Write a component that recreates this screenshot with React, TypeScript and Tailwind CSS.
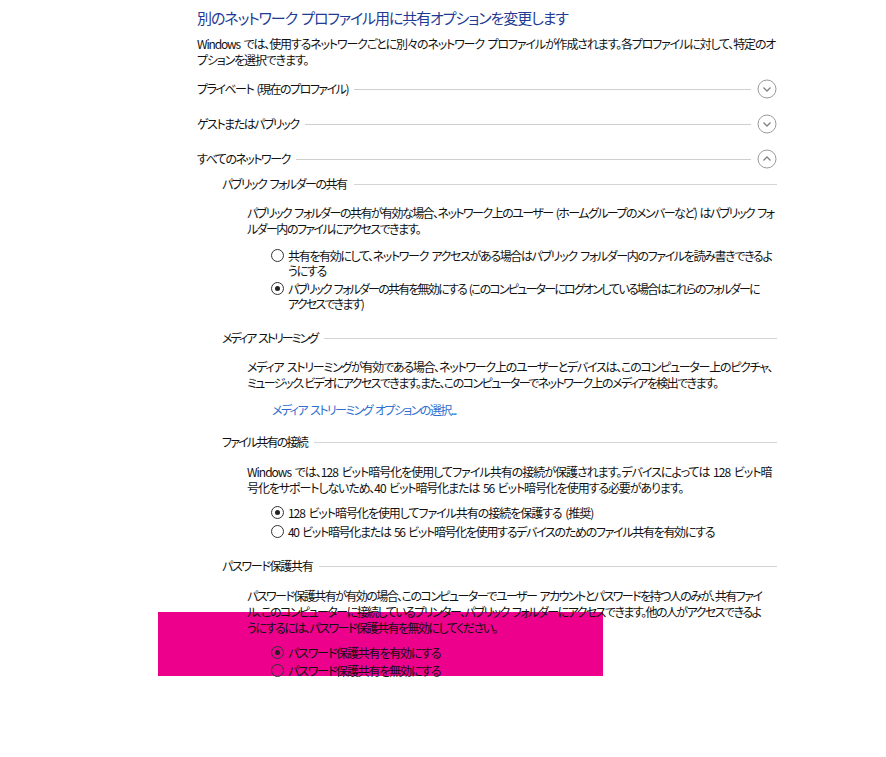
import React from "react";

type Line = { t: string; c?: string };

const Chevron = ({ up }: { up?: boolean }) => (
  <svg width="20" height="20" viewBox="0 0 20 20" className="shrink-0">
    <circle cx="10" cy="10" r="9" fill="none" stroke="#9a9a9a" strokeWidth="1" />
    {up ? (
      <path d="M6.5 11.5 L10 8 L13.5 11.5" fill="none" stroke="#808080" strokeWidth="1.3" />
    ) : (
      <path d="M6.5 8.5 L10 12 L13.5 8.5" fill="none" stroke="#808080" strokeWidth="1.3" />
    )}
  </svg>
);

const ProfileRow = ({ label, up, mt }: { label: string; up?: boolean; mt: string }) => (
  <div className={`flex items-center h-[20px] ${mt}`}>
    <span className="whitespace-nowrap tracking-[-1.5px]">{label}</span>
    <div className="flex-1 h-px bg-[#cfcfcf] ml-[6px] mr-[6px]" />
    <Chevron up={up} />
  </div>
);

const SubHeader = ({ label, mt, tr }: { label: string; mt: string; tr: string }) => (
  <div className={`flex items-center h-[16px] ${mt}`}>
    <span className={`whitespace-nowrap ${tr}`}>{label}</span>
    <div className="flex-1 h-px bg-[#d4d4d4] ml-[7px]" />
  </div>
);

const Radio = ({ checked, lines, mt }: { checked?: boolean; lines: Line[]; mt: string }) => (
  <div className={`flex items-start ${mt}`}>
    <div className="mt-[1px] w-[13px] h-[13px] rounded-full border border-[#333] flex items-center justify-center shrink-0">
      {checked && <div className="w-[5px] h-[5px] rounded-full bg-[#222]" />}
    </div>
    <div className="ml-[4px] leading-[15px] whitespace-nowrap">
      {lines.map((l, i) => (
        <div key={i} className={l.c ?? "tracking-[-1.3px]"}>
          {l.t}
        </div>
      ))}
    </div>
  </div>
);

const Para = ({ lines, mt }: { lines: Line[]; mt: string }) => (
  <div className={`leading-[16px] whitespace-nowrap ${mt}`}>
    {lines.map((l, i) => (
      <div key={i} className={l.c ?? "tracking-[-1.4px]"}>
        {l.t}
      </div>
    ))}
  </div>
);

export default function App() {
  return (
    <div className="relative w-[886px] h-[757px] bg-white overflow-hidden text-[12px] text-[#111] font-['Noto_Sans_CJK_JP','Noto_Sans',sans-serif] [font-feature-settings:'palt'] [word-spacing:2px]">
      <div className="absolute left-[158px] top-[612px] w-[445px] h-[64px] bg-[#ec008c]" />
      <div className="relative pl-[197px] pr-[109px] pt-[8px]">
        <div className="h-[20px] leading-[20px] text-[15px] tracking-[-1.1px] text-[#1e3a94] whitespace-nowrap">
          別のネットワーク プロファイル用に共有オプションを変更します
        </div>
        <Para
          mt="mt-[8px]"
          lines={[
            {
              t: "Windows では、使用するネットワークごとに別々のネットワーク プロファイルが作成されます。各プロファイルに対して、特定のオ",
              c: "tracking-[-1.15px]",
            },
            { t: "プションを選択できます。", c: "tracking-[-1.15px]" },
          ]}
        />
        <ProfileRow label="プライベート (現在のプロファイル)" mt="mt-[11px]" />
        <ProfileRow label="ゲストまたはパブリック" mt="mt-[15px]" />
        <ProfileRow label="すべてのネットワーク" up mt="mt-[15px]" />

        <div className="pl-[25px]">
          <SubHeader label="パブリック フォルダーの共有" mt="mt-[7px]" tr="tracking-[-1.5px]" />
          <div className="pl-[25px]">
            <Para
              mt="mt-[13px]"
              lines={[
                {
                  t: "パブリック フォルダーの共有が有効な場合、ネットワーク上のユーザー (ホームグループのメンバーなど) はパブリック フォ",
                  c: "tracking-[-1.55px]",
                },
                { t: "ルダー内のファイルにアクセスできます。", c: "tracking-[-1.55px]" },
              ]}
            />
            <div className="pl-[24px]">
              <Radio
                mt="mt-[11px]"
                lines={[
                  {
                    t: "共有を有効にして、ネットワーク アクセスがある場合はパブリック フォルダー内のファイルを読み書きできるよ",
                    c: "tracking-[-1.35px]",
                  },
                  { t: "うにする", c: "tracking-[-1.35px]" },
                ]}
              />
              <Radio
                checked
                mt="mt-[3px]"
                lines={[
                  {
                    t: "パブリック フォルダーの共有を無効にする (このコンピューターにログオンしている場合はこれらのフォルダーに",
                    c: "tracking-[-1.8px]",
                  },
                  { t: "アクセスできます)", c: "tracking-[-1.8px]" },
                ]}
              />
            </div>
          </div>

          <SubHeader label="メディア ストリーミング" mt="mt-[19px]" tr="tracking-[-2px]" />
          <div className="pl-[25px]">
            <Para
              mt="mt-[13px]"
              lines={[
                {
                  t: "メディア ストリーミングが有効である場合、ネットワーク上のユーザーとデバイスは、このコンピューター上のピクチャ、",
                  c: "tracking-[-1.25px]",
                },
                {
                  t: "ミュージック、ビデオにアクセスできます。また、このコンピューターでネットワーク上のメディアを検出できます。",
                  c: "tracking-[-1.6px]",
                },
              ]}
            />
            <div className="pl-[25px] mt-[11px] h-[16px] leading-[16px] tracking-[-1.6px] text-[#2f6fd0] whitespace-nowrap">
              メディア ストリーミング オプションの選択...
            </div>
          </div>

          <SubHeader label="ファイル共有の接続" mt="mt-[16px]" tr="tracking-[-1.8px]" />
          <div className="pl-[25px]">
            <Para
              mt="mt-[14px]"
              lines={[
                {
                  t: "Windows では、128 ビット暗号化を使用してファイル共有の接続が保護されます。デバイスによっては 128 ビット暗",
                  c: "tracking-[-1px]",
                },
                {
                  t: "号化をサポートしないため、40 ビット暗号化または 56 ビット暗号化を使用する必要があります。",
                  c: "tracking-[-1.1px]",
                },
              ]}
            />
            <div className="pl-[24px]">
              <Radio
                checked
                mt="mt-[9px]"
                lines={[{ t: "128 ビット暗号化を使用してファイル共有の接続を保護する (推奨)", c: "tracking-[-1.05px]" }]}
              />
              <Radio
                mt="mt-[4px]"
                lines={[
                  {
                    t: "40 ビット暗号化または 56 ビット暗号化を使用するデバイスのためのファイル共有を有効にする",
                    c: "tracking-[-1.3px]",
                  },
                ]}
              />
            </div>
          </div>

          <SubHeader label="パスワード保護共有" mt="mt-[19px]" tr="tracking-[-1.3px]" />
          <div className="pl-[25px]">
            <Para
              mt="mt-[14px]"
              lines={[
                {
                  t: "パスワード保護共有が有効の場合、このコンピューターでユーザー アカウントとパスワードを持つ人のみが、共有ファイ",
                  c: "tracking-[-1.55px]",
                },
                {
                  t: "ル、このコンピューターに接続しているプリンター、パブリック フォルダーにアクセスできます。他の人がアクセスできるよ",
                  c: "tracking-[-1.55px]",
                },
                { t: "うにするには、パスワード保護共有を無効にしてください。", c: "tracking-[-1.5px]" },
              ]}
            />
            <div className="pl-[24px]">
              <Radio checked mt="mt-[9px]" lines={[{ t: "パスワード保護共有を有効にする", c: "tracking-[-1.2px]" }]} />
              <Radio mt="mt-[3px]" lines={[{ t: "パスワード保護共有を無効にする", c: "tracking-[-1.2px]" }]} />
            </div>
          </div>
        </div>
      </div>
    </div>
  );
}
